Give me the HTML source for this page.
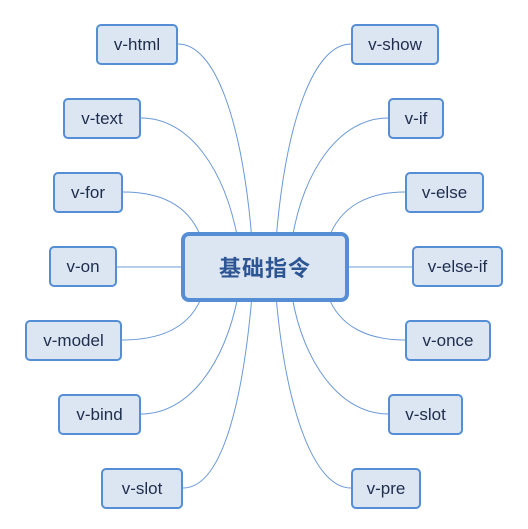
<!DOCTYPE html>
<html><head><meta charset="utf-8"><style>
body{margin:0;width:528px;height:529px;background:#fff;position:relative;overflow:hidden;font-family:"Liberation Sans","DejaVu Sans",sans-serif}
.b{position:absolute;box-sizing:border-box;border:2px solid #558ed5;border-radius:5px;background:#dce6f2;color:#1f2d4d;font-size:17px;display:flex;align-items:center;justify-content:center;height:41px}
.c{position:absolute;left:181px;top:232px;width:168px;height:70px;box-sizing:border-box;border:4px solid #558ed5;border-radius:8px;background:#dce6f2;color:#2d5594;font:bold 22px "Liberation Sans","Noto Sans CJK SC",sans-serif;display:flex;align-items:center;justify-content:center;letter-spacing:1px}
svg{position:absolute;left:0;top:0}
</style></head><body>
<svg width="528" height="529" fill="none" stroke="#6b98d6" stroke-width="1">
<path d="M178 44 C215 44 242 120 252 240"/>
<path d="M141 118 C190 118 225 170 238 240"/>
<path d="M123 192 C160 192 190 205 202 240"/>
<path d="M117 267 L185 267"/>
<path d="M122 340 C160 340 190 328 202 296"/>
<path d="M141 414 C190 414 225 362 238 296"/>
<path d="M183 488 C220 488 242 410 252 296"/>
<path d="M351 44 C314 44 286 120 276 240"/>
<path d="M388 118 C340 118 303 170 292 240"/>
<path d="M405 192 C370 192 340 205 328 240"/>
<path d="M412 267 L345 267"/>
<path d="M405 340 C370 340 340 328 328 296"/>
<path d="M388 414 C340 414 303 362 292 296"/>
<path d="M351 488 C314 488 286 410 276 296"/>
</svg>
<div class="b" style="left:96px;top:24px;width:82px">v-html</div>
<div class="b" style="left:63px;top:98px;width:78px">v-text</div>
<div class="b" style="left:53px;top:172px;width:70px">v-for</div>
<div class="b" style="left:49px;top:246px;width:68px">v-on</div>
<div class="b" style="left:25px;top:320px;width:97px">v-model</div>
<div class="b" style="left:58px;top:394px;width:83px">v-bind</div>
<div class="b" style="left:101px;top:468px;width:82px">v-slot</div>
<div class="b" style="left:351px;top:24px;width:88px">v-show</div>
<div class="b" style="left:388px;top:98px;width:56px">v-if</div>
<div class="b" style="left:405px;top:172px;width:79px">v-else</div>
<div class="b" style="left:412px;top:246px;width:91px">v-else-if</div>
<div class="b" style="left:405px;top:320px;width:86px">v-once</div>
<div class="b" style="left:388px;top:394px;width:75px">v-slot</div>
<div class="b" style="left:351px;top:468px;width:70px">v-pre</div>
<div class="c">基础指令</div>
</body></html>
